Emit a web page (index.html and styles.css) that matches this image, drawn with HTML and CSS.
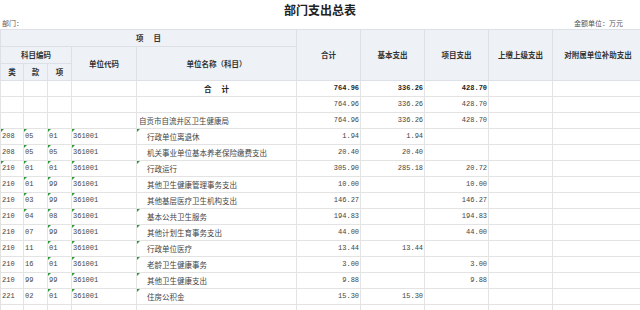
FILE: index.html
```html
<!DOCTYPE html>
<html>
<head>
	<meta charset="utf-8">
	<title>部门支出总表</title>
	<link rel="stylesheet" href="styles.css">
</head>
<body>

<div class="title">部门支出总表</div>
<div class="info">
  <span>部门：</span>
  <span>金额单位：万元</span>
</div>

<table class="report">
  <colgroup>
    <col class="c-code">
    <col class="c-code2">
    <col class="c-code2">
    <col class="c-unit">
    <col class="c-name">
    <col class="c-num">
    <col class="c-num">
    <col class="c-num">
    <col class="c-num">
    <col class="c-last">
  </colgroup>
  <thead>
    <tr>
      <th colspan="5">项&nbsp;&nbsp;&nbsp;&nbsp;&nbsp;&nbsp;目</th>
      <th rowspan="3">合计</th>
      <th rowspan="3">基本支出</th>
      <th rowspan="3">项目支出</th>
      <th rowspan="3">上缴上级支出</th>
      <th rowspan="3">对附属单位补助支出</th>
    </tr>
    <tr>
      <th colspan="3">科目编码</th>
      <th rowspan="2">单位代码</th>
      <th rowspan="2">单位名称（科目）</th>
    </tr>
    <tr>
      <th>类</th>
      <th>款</th>
      <th>项</th>
    </tr>
  </thead>
  <tbody>
    <tr class="total">
      <td></td><td></td><td></td><td></td>
      <td class="center">合&nbsp;&nbsp;&nbsp;&nbsp;&nbsp;&nbsp;计</td>
      <td class="num">764.96</td><td class="num">336.26</td><td class="num">428.70</td><td></td><td></td>
    </tr>
    <tr>
      <td></td><td></td><td></td><td></td><td></td>
      <td class="num">764.96</td><td class="num">336.26</td><td class="num">428.70</td><td></td><td></td>
    </tr>
    <tr>
      <td></td><td></td><td></td><td></td>
      <td class="name">自贡市自流井区卫生健康局</td>
      <td class="num">764.96</td><td class="num">336.26</td><td class="num">428.70</td><td></td><td></td>
    </tr>
    <tr>
      <td class="code m">208</td><td class="code m">05</td><td class="code m">01</td><td class="code m">361001</td>
      <td class="name sub m">行政单位离退休</td>
      <td class="num">1.94</td><td class="num">1.94</td><td></td><td></td><td></td>
    </tr>
    <tr>
      <td class="code">208</td><td class="code m">05</td><td class="code m">05</td><td class="code m">361001</td>
      <td class="name sub">机关事业单位基本养老保险缴费支出</td>
      <td class="num">20.40</td><td class="num">20.40</td><td></td><td></td><td></td>
    </tr>
    <tr>
      <td class="code m">210</td><td class="code m">01</td><td class="code m">01</td><td class="code m">361001</td>
      <td class="name sub m">行政运行</td>
      <td class="num">305.90</td><td class="num">285.18</td><td class="num">20.72</td><td></td><td></td>
    </tr>
    <tr>
      <td class="code">210</td><td class="code m">01</td><td class="code m">99</td><td class="code m">361001</td>
      <td class="name sub">其他卫生健康管理事务支出</td>
      <td class="num">10.00</td><td></td><td class="num">10.00</td><td></td><td></td>
    </tr>
    <tr>
      <td class="code">210</td><td class="code m">03</td><td class="code m">99</td><td class="code m">361001</td>
      <td class="name sub">其他基层医疗卫生机构支出</td>
      <td class="num">146.27</td><td></td><td class="num">146.27</td><td></td><td></td>
    </tr>
    <tr>
      <td class="code">210</td><td class="code m">04</td><td class="code m">08</td><td class="code m">361001</td>
      <td class="name sub m">基本公共卫生服务</td>
      <td class="num">194.83</td><td></td><td class="num">194.83</td><td></td><td></td>
    </tr>
    <tr>
      <td class="code">210</td><td class="code">07</td><td class="code m">99</td><td class="code m">361001</td>
      <td class="name sub m">其他计划生育事务支出</td>
      <td class="num">44.00</td><td></td><td class="num">44.00</td><td></td><td></td>
    </tr>
    <tr>
      <td class="code">210</td><td class="code">11</td><td class="code m">01</td><td class="code m">361001</td>
      <td class="name sub m">行政单位医疗</td>
      <td class="num">13.44</td><td class="num">13.44</td><td></td><td></td><td></td>
    </tr>
    <tr>
      <td class="code">210</td><td class="code">16</td><td class="code m">01</td><td class="code m">361001</td>
      <td class="name sub m">老龄卫生健康事务</td>
      <td class="num">3.00</td><td></td><td class="num">3.00</td><td></td><td></td>
    </tr>
    <tr>
      <td class="code">210</td><td class="code">99</td><td class="code m">99</td><td class="code m">361001</td>
      <td class="name sub m">其他卫生健康支出</td>
      <td class="num">9.88</td><td></td><td class="num">9.88</td><td></td><td></td>
    </tr>
    <tr>
      <td class="code">221</td><td class="code">02</td><td class="code m">01</td><td class="code m">361001</td>
      <td class="name sub m">住房公积金</td>
      <td class="num">15.30</td><td class="num">15.30</td><td></td><td></td><td></td>
    </tr>
    <tr>
      <td></td><td></td><td></td><td></td><td></td>
      <td></td><td></td><td></td><td></td><td></td>
    </tr>
  </tbody>
</table>

</body>
</html>
```

FILE: styles.css
```css
body {
  margin: 0;
  background: #fff;
  color: #333;
  font-family: "Noto Sans CJK SC", sans-serif;
  overflow: hidden;
}

.title {
  height: 18px;
  line-height: 20px;
  text-align: center;
  font-size: 12px;
  font-weight: bold;
  color: #222;
}

.info {
  display: flex;
  justify-content: space-between;
  height: 11px;
  line-height: 11px;
  font-size: 7px;
  color: #555;
  padding: 0 17px 0 2px;
}

.report {
  border-collapse: collapse;
  table-layout: fixed;
  width: 642px;
  font-size: 7.5px;
}

.c-code { width: 23px; }
.c-code2 { width: 24px; }
.c-unit { width: 65px; }
.c-name { width: 160px; }
.c-num { width: 64px; }
.c-last { width: 91px; }

.report th,
.report td {
  border: 1px solid #e3e3e3;
  padding: 0;
  white-space: nowrap;
  overflow: hidden;
}

.report th {
  background-color: #eef1f6;
  border-color: #dde1e7;
  color: #333;
  font-weight: bold;
  height: 16px;
  line-height: 16px;
}

.report td {
  height: 15px;
  line-height: 15px;
  color: #444;
  position: relative;
}

.report .num {
  text-align: right;
  padding-right: 1px;
  font-family: "Liberation Mono", monospace;
  font-size: 7px;
}

.report .code {
  padding-left: 1px;
  font-family: "Liberation Mono", monospace;
  font-size: 7px;
}

.report .name {
  padding-left: 2px;
}

.report .sub {
  padding-left: 10px;
}

.report .center {
  text-align: center;
}

.total td {
  font-weight: bold;
  color: #222;
}

/* green corner marks on edited cells */
.report .m::before {
  content: "";
  position: absolute;
  left: 0;
  top: 0;
  border-top: 3px solid #2e9a3a;
  border-right: 3px solid transparent;
}
```
